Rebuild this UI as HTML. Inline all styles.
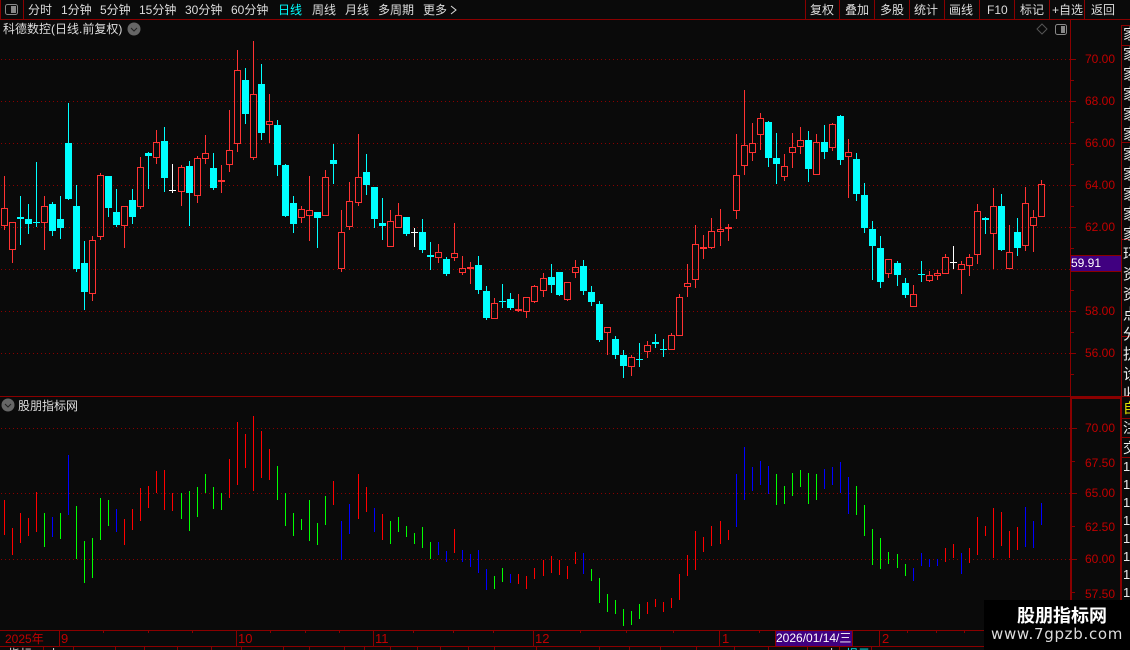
<!DOCTYPE html>
<html><head><meta charset="utf-8">
<style>
html,body{margin:0;padding:0;background:#0a0a0a}
#p{position:relative;width:1130px;height:650px;overflow:hidden;background:#0a0a0a;font-family:"Liberation Sans","WenQuanYi Zen Hei","Noto Sans CJK SC",sans-serif;font-size:12px;color:#ddd}
#p span,#p div{position:absolute;white-space:nowrap}
.t{top:0;line-height:20px}
.a{color:#c00000;font-size:12px;line-height:14px;left:1085px}
.m{color:#c00000;font-size:13px;line-height:16px;top:631px}
svg{position:absolute;left:0;top:0}
</style></head><body><div id="p">
<svg id="s" width="1130" height="650" shape-rendering="crispEdges"></svg>
<span class="t" style="left:28px">分时</span>
<span class="t" style="left:61px">1分钟</span>
<span class="t" style="left:100px">5分钟</span>
<span class="t" style="left:139px">15分钟</span>
<span class="t" style="left:185px">30分钟</span>
<span class="t" style="left:231px">60分钟</span>
<span class="t" style="left:278px;color:#00ffff">日线</span>
<span class="t" style="left:312px">周线</span>
<span class="t" style="left:345px">月线</span>
<span class="t" style="left:378px">多周期</span>
<span class="t" style="left:423px">更多</span>
<span class="t" style="left:810px">复权</span>
<span class="t" style="left:845px">叠加</span>
<span class="t" style="left:880px">多股</span>
<span class="t" style="left:914px">统计</span>
<span class="t" style="left:949px">画线</span>
<span class="t" style="left:987px">F10</span>
<span class="t" style="left:1020px">标记</span>
<span class="t" style="left:1052px">+自选</span>
<span class="t" style="left:1091px">返回</span>
<span style="left:3px;top:21px;line-height:16px">科德数控(日线.前复权)</span>
<span style="left:18px;top:398px;line-height:16px">股朋指标网</span>
<span class="a" style="top:52px">70.00</span>
<span class="a" style="top:94px">68.00</span>
<span class="a" style="top:136px">66.00</span>
<span class="a" style="top:178px">64.00</span>
<span class="a" style="top:220px">62.00</span>
<span class="a" style="top:304px">58.00</span>
<span class="a" style="top:346px">56.00</span>
<span class="a" style="top:421px">70.00</span>
<span class="a" style="top:456px">67.50</span>
<span class="a" style="top:486px">65.00</span>
<span class="a" style="top:520px">62.50</span>
<span class="a" style="top:552px">60.00</span>
<span class="a" style="top:587px">57.50</span>
<span style="left:1071px;top:256px;line-height:15px;color:#fff">59.91</span>
<span class="m" style="left:5px;font-size:12px">2025年</span>
<span class="m" style="left:61px">9</span>
<span class="m" style="left:238px">10</span>
<span class="m" style="left:375px">11</span>
<span class="m" style="left:535px">12</span>
<span class="m" style="left:722px">1</span>
<span class="m" style="left:882px">2</span>
<span style="left:776px;top:631px;line-height:15px;color:#fff">2026/01/14/三</span>
<div style="left:1122px;top:25px;width:8px;height:371px;overflow:hidden">
<span style="left:1px;top:0;font-size:15px;line-height:20px;white-space:normal;width:16px;color:#eee">家家家家家家家家家家家环资资点分抗诊收</span></div>
<div style="left:1122px;top:398px;width:8px;height:202px;overflow:hidden">
<span style="left:1px;top:0;font-size:14px;line-height:20px;color:#e0e000">自</span>
<span style="left:1px;top:20px;font-size:14px;line-height:20px;color:#eee">注</span>
<span style="left:1px;top:40px;font-size:14px;line-height:20px;color:#eee">交</span>
<span style="left:1px;top:61px;font-size:13px;line-height:16px;color:#eee">1</span>
<span style="left:1px;top:79px;font-size:13px;line-height:16px;color:#eee">1</span>
<span style="left:1px;top:97px;font-size:13px;line-height:16px;color:#eee">1</span>
<span style="left:1px;top:115px;font-size:13px;line-height:16px;color:#eee">1</span>
<span style="left:1px;top:133px;font-size:13px;line-height:16px;color:#eee">1</span>
<span style="left:1px;top:151px;font-size:13px;line-height:16px;color:#eee">1</span>
<span style="left:1px;top:169px;font-size:13px;line-height:16px;color:#eee">1</span>
<span style="left:1px;top:187px;font-size:13px;line-height:16px;color:#eee">1</span>
</div>
<div style="left:0;top:647px;width:1130px;height:3px;overflow:hidden">
<span style="left:8px;top:0;line-height:14px">指标</span>
<span style="left:48px;top:0;line-height:14px">上</span>
<span style="left:826px;top:0;line-height:14px">上</span>
<span style="left:846px;top:0;line-height:14px;color:#00ffff">提示</span>
</div>
<div style="left:984px;top:600px;width:146px;height:50px;background:#000"></div>
<span style="left:1017px;top:604px;font-size:18px;line-height:22px;font-weight:bold;color:#fff;font-family:'Noto Sans CJK SC',sans-serif">股朋指标网</span>
<span style="left:991px;top:625px;font-size:15px;line-height:18px;letter-spacing:.7px;color:#ddd;font-family:'DejaVu Sans',sans-serif">www.7gpzb.com</span>
</div>
<script>
var C=[[176,208,226,230,'r'],[222,222,250,263,'r'],[196,217,219,244,'c'],[204,219,224,233,'c'],[162,222,223,226,'c'],[196,206,223,250,'r'],[202,204,231,235,'c'],[196,219,228,238,'c'],[103,143,199,199,'c'],[185,206,269,271,'c'],[241,263,292,309,'c'],[236,240,294,301,'r'],[173,175,237,240,'r'],[176,176,208,216,'c'],[189,212,225,226,'c'],[206,206,226,248,'r'],[189,200,217,223,'c'],[157,167,207,209,'r'],[152,153,156,188,'c'],[130,142,158,164,'r'],[127,141,178,191,'c'],[164,190,190,192,'w'],[165,167,192,206,'r'],[161,166,193,225,'c'],[156,158,196,203,'r'],[135,153,159,164,'r'],[153,168,188,189,'c'],[165,180,182,192,'f'],[110,150,165,172,'r'],[50,70,144,152,'r'],[68,80,114,123,'c'],[41,94,158,160,'r'],[64,84,133,139,'c'],[94,121,125,143,'r'],[120,125,165,175,'c'],[164,165,216,216,'c'],[196,203,224,232,'c'],[206,209,218,223,'r'],[176,210,216,241,'r'],[212,212,218,247,'c'],[170,177,216,216,'r'],[144,160,164,183,'c'],[210,232,269,272,'r'],[182,201,227,230,'r'],[134,177,203,206,'r'],[154,172,185,194,'c'],[187,187,219,227,'c'],[198,223,226,239,'c'],[210,221,247,247,'r'],[203,215,228,228,'r'],[217,217,234,235,'c'],[228,232,232,246,'w'],[219,232,250,252,'c'],[242,255,257,269,'c'],[244,252,258,263,'r'],[257,259,274,275,'c'],[223,253,258,261,'r'],[256,268,273,275,'r'],[262,267,269,283,'f'],[256,265,290,293,'c'],[286,291,318,319,'c'],[298,303,319,319,'r'],[284,301,302,307,'c'],[293,299,308,309,'c'],[294,309,311,311,'f'],[297,297,312,318,'r'],[285,286,302,303,'r'],[273,278,291,297,'r'],[264,277,285,292,'c'],[272,272,295,295,'c'],[282,282,300,301,'r'],[260,267,273,278,'r'],[260,266,291,294,'c'],[286,292,302,305,'c'],[301,304,340,341,'c'],[327,327,333,355,'r'],[336,339,355,358,'c'],[350,355,366,377,'c'],[355,357,367,376,'r'],[343,359,360,366,'c'],[341,345,352,358,'r'],[334,342,344,347,'c'],[339,349,350,356,'c'],[333,335,350,350,'r'],[294,297,336,336,'r'],[264,283,287,297,'r'],[225,244,280,288,'r'],[235,247,249,258,'f'],[218,231,248,249,'r'],[209,229,232,246,'r'],[224,227,229,240,'f'],[134,175,211,219,'r'],[90,145,166,175,'r'],[123,143,153,161,'r'],[113,118,135,150,'r'],[121,122,158,166,'c'],[133,158,164,183,'c'],[154,166,177,181,'r'],[133,147,153,168,'r'],[127,140,147,154,'r'],[131,140,169,181,'c'],[134,142,175,175,'r'],[125,142,152,158,'c'],[123,124,148,151,'r'],[115,116,160,164,'c'],[139,152,157,198,'r'],[153,159,194,200,'c'],[183,195,228,232,'c'],[221,229,246,279,'c'],[236,248,282,287,'c'],[259,259,274,278,'r'],[261,263,275,285,'c'],[278,283,295,297,'c'],[285,294,307,307,'r'],[261,274,275,281,'c'],[271,275,281,282,'r'],[270,273,276,280,'r'],[254,257,274,274,'r'],[246,262,262,268,'w'],[261,264,270,294,'r'],[254,257,266,276,'r'],[204,211,255,264,'r'],[217,218,220,233,'c'],[188,206,234,269,'r'],[194,206,250,250,'c'],[225,252,269,269,'r'],[218,232,248,255,'c'],[187,203,246,251,'r'],[210,217,226,252,'r'],[180,184,217,217,'r']];
var B='500 535 r,528 555 r,513 543 r,518 536 r,492 532 r,513 547 g,517 537 b,513 539 g,455 515 b,506 559 g,541 583 g,538 578 g,498 540 g,500 526 g,509 532 b,519 545 r,509 530 r,488 521 r,486 508 r,471 493 r,470 510 r,493 511 r,493 519 g,491 531 g,487 517 g,474 493 g,487 509 g,493 510 g,459 498 r,422 485 r,434 468 r,416 491 r,431 478 r,449 480 r,466 500 g,493 526 g,513 536 g,519 530 g,500 541 g,523 545 g,496 525 g,481 505 r,521 560 b,504 534 b,474 519 r,487 512 r,508 532 b,514 540 r,521 544 g,517 532 g,526 537 g,533 544 g,527 548 g,542 559 g,542 555 b,551 562 b,529 553 r,550 562 b,554 567 b,550 573 b,569 590 b,576 589 g,568 582 g,574 583 b,574 584 r,576 589 r,568 579 r,560 576 r,556 573 r,560 575 r,566 579 r,552 564 r,553 574 b,569 581 g,578 603 g,594 612 g,600 614 g,609 626 g,611 625 g,604 619 g,602 614 r,599 607 r,602 612 r,598 608 r,574 600 r,555 576 r,531 570 r,537 552 r,526 546 r,521 544 r,530 540 r,474 527 b,447 500 b,467 491 b,461 485 b,466 494 b,474 505 g,486 504 g,473 496 g,470 487 g,473 504 g,474 500 g,469 489 b,467 485 b,462 493 b,477 514 b,486 515 g,505 536 g,529 565 g,538 569 g,552 564 g,554 568 g,564 576 g,568 581 b,553 566 b,559 567 b,559 566 b,548 562 r,544 558 r,553 574 b,548 563 r,517 555 r,526 536 r,508 558 r,512 546 r,531 558 r,527 550 r,507 547 b,521 548 b,503 525 b'.split(',');
function X(i){return 4+8*i+(i>=111?5:i>=89?4:i>=67?3:i>=44?2:i>=22?1:0)}
var h='',L='#8a0000';
function r(x,y,w,H,c){return '<rect x="'+x+'" y="'+y+'" width="'+w+'" height="'+H+'" fill="'+c+'"/>'}
[59,101,143,185,227,269,311,353,428,493,559].forEach(function(y){
 h+='<line x1="1" y1="'+(y+.5)+'" x2="1070" y2="'+(y+.5)+'" stroke="#8a0000" stroke-dasharray="1 3"/>'});
C.forEach(function(d,i){var x=X(i),a=d[0],t=d[1],b=d[2],l=d[3],k=d[4];
 var col=k=='c'?'#00ffff':k=='w'?'#ffffff':'#ff3232';
 if(k=='r'){
  if(t>a)h+=r(x,a,1,t-a,col);
  if(l>b)h+=r(x,b,1,l-b,col);
  h+='<rect x="'+(x-2.5)+'" y="'+(t+.5)+'" width="6" height="'+Math.max(b-t-1,1)+'" fill="none" stroke="'+col+'"/>';
 }else{
  h+=r(x,a,1,l-a+1,col);
  h+=r(x-3,t,7,Math.max(b-t,1),col);
 }});
B.forEach(function(s,i){var p=s.split(' ');
 h+=r(X(i),+p[0],1,p[1]-p[0],p[2]=='r'?'#ff0000':p[2]=='g'?'#00ff00':'#0000ff')});
h+=r(0,19,1130,1,L);
h+=r(23,0,1,19,L);h+=r(0,0,1,19,L);
[805,839,874,909,944,979,1014,1049,1084].forEach(function(x){h+=r(x,0,1,19,L)});
h+=r(1070,20,1,376,L);h+=r(1121,25,1,625,L);
h+=r(0,396,1122,1,L);h+=r(1071,397,50,2,L);h+=r(1070,397,2,233,L);h+=r(1120,397,2,233,L);
[25,45,142,239,336,396,418,437,457].forEach(function(y){h+=r(1121,y,9,1,L)});
[59,101,143,185,227,269,311,353].forEach(function(y){h+=r(1071,y,5,1,L);h+=r(1071,y+21,3,1,L)});
[428,493,559].forEach(function(y){h+=r(1072,y,5,1,L)});
[461,526,592].forEach(function(y){h+=r(1072,y,3,1,L)});
h+=r(1071,255,50,17,'#400080');h+=r(1071,255,50,1,L);h+=r(1071,271,50,1,L);
h+=r(0,630,1122,1,L);h+=r(0,646,1130,1,L);
[59,236,373,533,719,879].forEach(function(x){h+=r(x,630,1,16,L)});
[103,148,192,270,305,339,413,453,493,580,626,673,759,907,936,964,1000,1040].forEach(function(x){h+=r(x,631,1,2,L)});
h+=r(775,631,78,15,'#400080');h+=r(775,630,1,16,L);h+=r(852,630,1,16,L);
[43,73,115,144,177,211,241,283,309,344,364,390,417,440,468,494,536,599,629,660,696,734,768,807,839,871].forEach(function(x){h+=r(x,647,1,3,L)});
h+='<g shape-rendering="auto">';
h+='<rect x="5.5" y="4.5" width="12" height="10" rx="2" fill="none" stroke="#888"/><rect x="11" y="6" width="5" height="7" fill="#888"/>';
h+='<rect x="1055.5" y="24.5" width="11" height="10" rx="2" fill="none" stroke="#888"/><rect x="1061" y="26" width="4" height="7" fill="#888"/>';
h+='<path d="M1042 24L1047 29L1042 34L1037 29Z" fill="none" stroke="#555"/>';
h+='<circle cx="134" cy="29" r="6.5" fill="#666"/><path d="M131 28L134 31L137 28" fill="none" stroke="#222"/>';
h+='<circle cx="8" cy="405" r="6.5" fill="#666"/><path d="M5 404L8 407L11 404" fill="none" stroke="#222"/>';
h+='<path d="M451 6L456 10L451 14" fill="none" stroke="#ddd"/>';
h+='</g>';
document.getElementById('s').innerHTML=h;
</script>
</body></html>
